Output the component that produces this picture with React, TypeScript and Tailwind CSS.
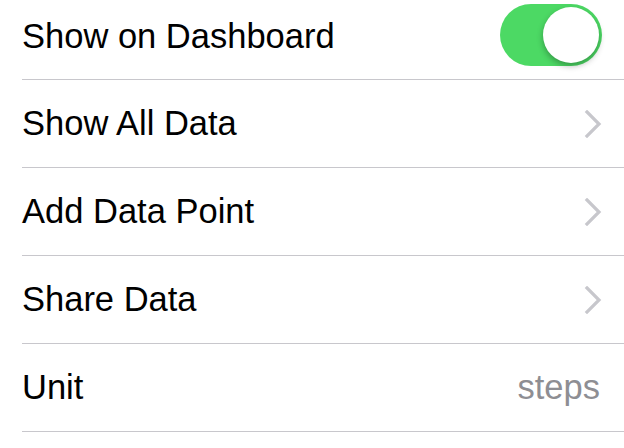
import { useState } from 'react';

const rows = [
  { label: 'Show All Data', kind: 'link' },
  { label: 'Add Data Point', kind: 'link' },
  { label: 'Share Data', kind: 'link' },
  { label: 'Unit', kind: 'value', value: 'steps' },
];

function Chevron() {
  return (
    <svg width="18" height="28" viewBox="0 0 18 28" fill="none" className="shrink-0">
      <path d="M3 2 L15 14 L3 26" stroke="#c7c7cc" strokeWidth="3.2" strokeLinecap="square" />
    </svg>
  );
}

function Toggle({ on, onChange }: { on: boolean; onChange: (v: boolean) => void }) {
  return (
    <button
      onClick={() => onChange(!on)}
      className={`relative -mt-[2px] h-[62px] w-[102px] rounded-full transition-colors ${on ? 'bg-[#4cd964]' : 'bg-[#e5e5ea]'}`}
    >
      <span
        className={`absolute top-[3px] h-[56px] w-[56px] rounded-full bg-white shadow-[0_3px_6px_rgba(0,0,0,0.3)] transition-all ${on ? 'left-[43px]' : 'left-[3px]'}`}
      />
    </button>
  );
}

export default function App() {
  const [showOnDashboard, setShowOnDashboard] = useState(true);

  return (
    <div className="h-[448px] w-[624px] overflow-hidden bg-white font-['Liberation_Sans',Arial,sans-serif] text-[34.5px] text-black">
      <div className="-mt-[8px]">
        <div className="ml-[22px] flex h-[88px] items-center justify-between border-b border-[#c8c7cc] pr-[22px]">
          <span className="pt-[3px]">Show on Dashboard</span>
          <Toggle on={showOnDashboard} onChange={setShowOnDashboard} />
        </div>
        {rows.map((row) => (
          <div
            key={row.label}
            className="ml-[22px] flex h-[88px] items-center justify-between border-b border-[#c8c7cc] pr-[22px]"
          >
            <span>{row.label}</span>
            {row.kind === 'link' ? (
              <Chevron />
            ) : (
              <span className="pr-[2px] text-[#8e8e93]">{row.value}</span>
            )}
          </div>
        ))}
      </div>
    </div>
  );
}
